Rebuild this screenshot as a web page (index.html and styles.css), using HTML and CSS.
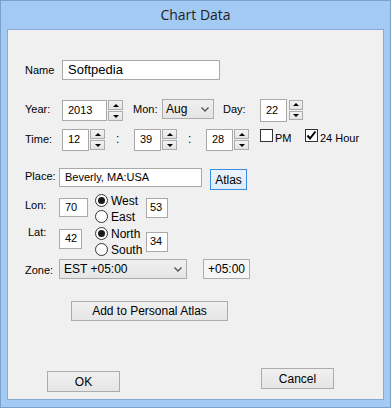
FILE: index.html
```html
<!DOCTYPE html>
<html lang="en">

<head>
    <meta charset="UTF-8">
    <meta name="viewport" content="width=device-width, initial-scale=1.0">
    <title>Chart Data</title>
    <link rel="stylesheet" href="styles.css">
</head>

<body>
    <div class="window">
        <div class="titlebar">Chart Data</div>
        <div class="client">
            <!-- name -->
            <div class="row row-name">
                <span class="label lbl-wide">Name</span>
                <span class="edit edit-name">Softpedia</span>
            </div>
            <!-- date -->
            <div class="row row-year">
                <span class="label lbl-wide">Year:</span>
                <span class="edit edit-year">2013</span>
                <span class="spin spin-year"><span class="spin-btn up"></span><span class="spin-btn down"></span></span>
                <span class="label lbl-mon">Mon:</span>
                <span class="combo combo-mon">Aug<svg class="chev" width="8" height="5" viewBox="0 0 8 5"><polyline points="0.5,0.5 4,4 7.5,0.5" fill="none" stroke="#555" stroke-width="1.4"/></svg></span>
                <span class="label lbl-day">Day:</span>
                <span class="edit edit-day">22</span>
                <span class="spin spin-day"><span class="spin-btn up"></span><span class="spin-btn down"></span></span>
            </div>
            <!-- time -->
            <div class="row row-time">
                <span class="label lbl-wide">Time:</span>
                <span class="edit edit-time">12</span>
                <span class="spin"><span class="spin-btn up"></span><span class="spin-btn down"></span></span>
                <span class="colon">:</span>
                <span class="edit edit-time">39</span>
                <span class="spin"><span class="spin-btn up"></span><span class="spin-btn down"></span></span>
                <span class="colon">:</span>
                <span class="edit edit-time">28</span>
                <span class="spin"><span class="spin-btn up"></span><span class="spin-btn down"></span></span>
                <span class="check check-pm"><span class="box"></span>PM</span>
                <span class="check"><span class="box"><svg width="11" height="11" viewBox="0 0 11 11"><polyline points="1.5,5.5 4,8.5 9.5,1.5" fill="none" stroke="#000" stroke-width="2"/></svg></span>24 Hour</span>
            </div>
            <!-- place -->
            <div class="row row-place">
                <span class="label lbl-place">Place:</span>
                <span class="edit edit-place">Beverly, MA:USA</span>
                <span class="button btn-atlas">Atlas</span>
            </div>
            <div class="row row-lon">
                <span class="label lbl-lon">Lon:</span>
                <span class="edit edit-lon">70</span>
                <span class="radios radios-lon">
                    <span class="radio on"><span class="dot"></span>West</span>
                    <span class="radio"><span class="dot"></span>East</span>
                </span>
                <span class="edit edit-min edit-lon-min">53</span>
            </div>
            <div class="row row-lat">
                <span class="label lbl-lat">Lat:</span>
                <span class="edit edit-lat">42</span>
                <span class="radios radios-lat">
                    <span class="radio on"><span class="dot"></span>North</span>
                    <span class="radio"><span class="dot"></span>South</span>
                </span>
                <span class="edit edit-min edit-lat-min">34</span>
            </div>
            <div class="row row-zone">
                <span class="label lbl-zone">Zone:</span>
                <span class="combo combo-zone">EST +05:00<svg class="chev" width="8" height="5" viewBox="0 0 8 5"><polyline points="0.5,0.5 4,4 7.5,0.5" fill="none" stroke="#555" stroke-width="1.4"/></svg></span>
                <span class="offset">+05:00</span>
            </div>
            <div class="row row-add">
                <span class="button btn-add">Add to Personal Atlas</span>
            </div>
            <div class="row row-bottom">
                <span class="button btn-ok">OK</span>
                <span class="button btn-cancel">Cancel</span>
            </div>
        </div>
    </div>
</body>

</html>
```

FILE: styles.css
```css
* {
    margin: 0;
    padding: 0;
    box-sizing: border-box;
}

body {
    font-family: "Liberation Sans", Arial, sans-serif;
    font-size: 11px;
    color: #000;
    background: #fff;
}

.window {
    width: 391px;
    height: 408px;
    border: 1px solid #7ba0cb;
    background-color: #a3caf3;
    padding: 0 6px 7px 6px;
    display: flex;
    flex-direction: column;
}

.titlebar {
    height: 28px;
    line-height: 28px;
    text-align: center;
    font-family: "Open Sans", "Noto Sans", sans-serif;
    font-size: 14px;
    color: #1e1e1e;
}

.client {
    flex: 1;
    border: 1px solid #86aad5;
    background-color: #f0f0f0;
    padding: 30px 0 0 17px;
}

.row {
    display: flex;
    align-items: flex-start;
}

/* labels */
.label {
    white-space: nowrap;
}

.lbl-wide {
    width: 37px;
    line-height: 20px;
}

.row-year .label {
    line-height: 20px;
}

.lbl-mon {
    width: 29px;
    margin-left: 10px;
}

.lbl-day {
    width: 37px;
    margin-left: 9px;
}

.lbl-place {
    width: 34px;
    line-height: 17px;
}

.lbl-lon {
    width: 34px;
    margin-top: 5px;
    line-height: 13px;
}

.lbl-lat {
    width: 34px;
    padding-left: 3px;
    line-height: 16px;
}

.lbl-zone {
    width: 34px;
    line-height: 22px;
}

/* edit boxes */
.edit {
    display: flex;
    align-items: center;
    background-color: #fff;
    border: 1px solid #a9a9a9;
    padding: 0 0 2px 5px;
    white-space: nowrap;
    color: #000;
}

.edit-name {
    width: 158px;
    height: 20px;
    font-size: 13px;
}

.edit-year {
    width: 45px;
    height: 21px;
    margin-top: 1px;
}

.edit-day {
    width: 27px;
    height: 23px;
}

.edit-time {
    width: 27px;
    height: 22px;
}

.edit-place {
    width: 143px;
    height: 19px;
}

.edit-lon {
    width: 29px;
    height: 19px;
    margin-top: 4px;
}

.edit-lat {
    width: 23px;
    height: 20px;
    margin-top: 5px;
}

.edit-min {
    width: 22px;
    height: 20px;
    padding-left: 3px;
}

.edit-lon-min {
    margin-top: 4px;
}

.edit-lat-min {
    margin-top: 8px;
}

/* spin buttons */
.spin {
    width: 16px;
    height: 21px;
    display: flex;
    flex-direction: column;
    gap: 1px;
    padding-left: 1px;
}

.spin-year {
    margin-top: 1px;
}

.spin-day {
    margin-top: 1px;
    height: 20px;
    margin-left: 1px;
    width: 15px;
}

.spin-btn {
    flex: 1;
    border: 1px solid #adadad;
    background: linear-gradient(#f2f2f2, #e3e3e3);
    display: flex;
    align-items: center;
    justify-content: center;
}

.spin-btn::after {
    content: "";
    width: 0;
    height: 0;
    border-left: 3px solid transparent;
    border-right: 3px solid transparent;
}

.spin-btn.up::after {
    border-bottom: 3px solid #000;
}

.spin-btn.down::after {
    border-top: 3px solid #000;
}

.colon {
    width: 29px;
    padding-left: 11px;
    line-height: 21px;
    font-size: 12px;
}

/* combo boxes */
.combo {
    display: flex;
    align-items: center;
    justify-content: space-between;
    height: 20px;
    border: 1px solid #acacac;
    background: linear-gradient(#f0f0f0, #e5e5e5);
    padding: 0 4px 1px 4px;
    white-space: nowrap;
}

.combo-mon {
    width: 52px;
    font-size: 12px;
    padding-left: 3px;
}

.combo-zone {
    width: 128px;
    font-size: 12px;
}

.chev {
    margin-top: 1px;
}

.offset {
    width: 47px;
    height: 20px;
    margin-left: 16px;
    border: 1px solid #adadad;
    background-color: #f6f6f6;
    font-size: 12px;
    display: flex;
    align-items: center;
    justify-content: center;
}

/* check boxes */
.check {
    display: flex;
    align-items: flex-start;
    gap: 2px;
    line-height: 19px;
    white-space: nowrap;
}

.check-pm {
    width: 45px;
    margin-left: 11px;
}

.check .box {
    width: 13px;
    height: 13px;
    margin-top: 0;
    border: 1px solid #333;
    background-color: #fff;
    display: flex;
    align-items: center;
    justify-content: center;
}

/* radio buttons */
.radios {
    width: 51px;
    display: flex;
    flex-direction: column;
    gap: 3px;
}

.radios-lon {
    margin-left: 7px;
}

.radios-lat {
    margin-left: 13px;
    margin-top: 3px;
}

.radio {
    display: flex;
    align-items: center;
    gap: 3px;
    height: 13px;
    font-size: 12px;
    white-space: nowrap;
}

.radio .dot {
    width: 13px;
    height: 13px;
    border: 1px solid #333;
    border-radius: 50%;
    background-color: #fff;
    display: flex;
    align-items: center;
    justify-content: center;
}

.radio.on .dot::after {
    content: "";
    width: 7px;
    height: 7px;
    border-radius: 50%;
    background-color: #1a1a1a;
}

/* push buttons */
.button {
    display: flex;
    align-items: center;
    justify-content: center;
    border: 1px solid #acacac;
    background: linear-gradient(#f0f0f0, #e5e5e5);
    white-space: nowrap;
    font-size: 12px;
}

.btn-atlas {
    width: 37px;
    height: 21px;
    margin-left: 8px;
    margin-top: 1px;
    border-color: #3c8be0;
    background: linear-gradient(#ecf4fc, #dcecfc);
}

.btn-add {
    width: 157px;
    height: 20px;
    margin-left: 46px;
}

.btn-ok,
.btn-cancel {
    width: 73px;
    height: 21px;
}

.btn-ok {
    margin-left: 22px;
    margin-top: 3px;
}

.btn-cancel {
    margin-left: 141px;
}

/* row spacing */
.row-year {
    margin-top: 19px;
}

.row-time {
    margin-top: 7px;
}

.row-place {
    margin-top: 17px;
}

.row-lon {
    margin-top: 4px;
}

.row-lat {
    margin-top: 1px;
}

.row-zone {
    margin-top: 3px;
}

.row-add {
    margin-top: 20px;
}

.row-bottom {
    margin-top: 47px;
}
```
